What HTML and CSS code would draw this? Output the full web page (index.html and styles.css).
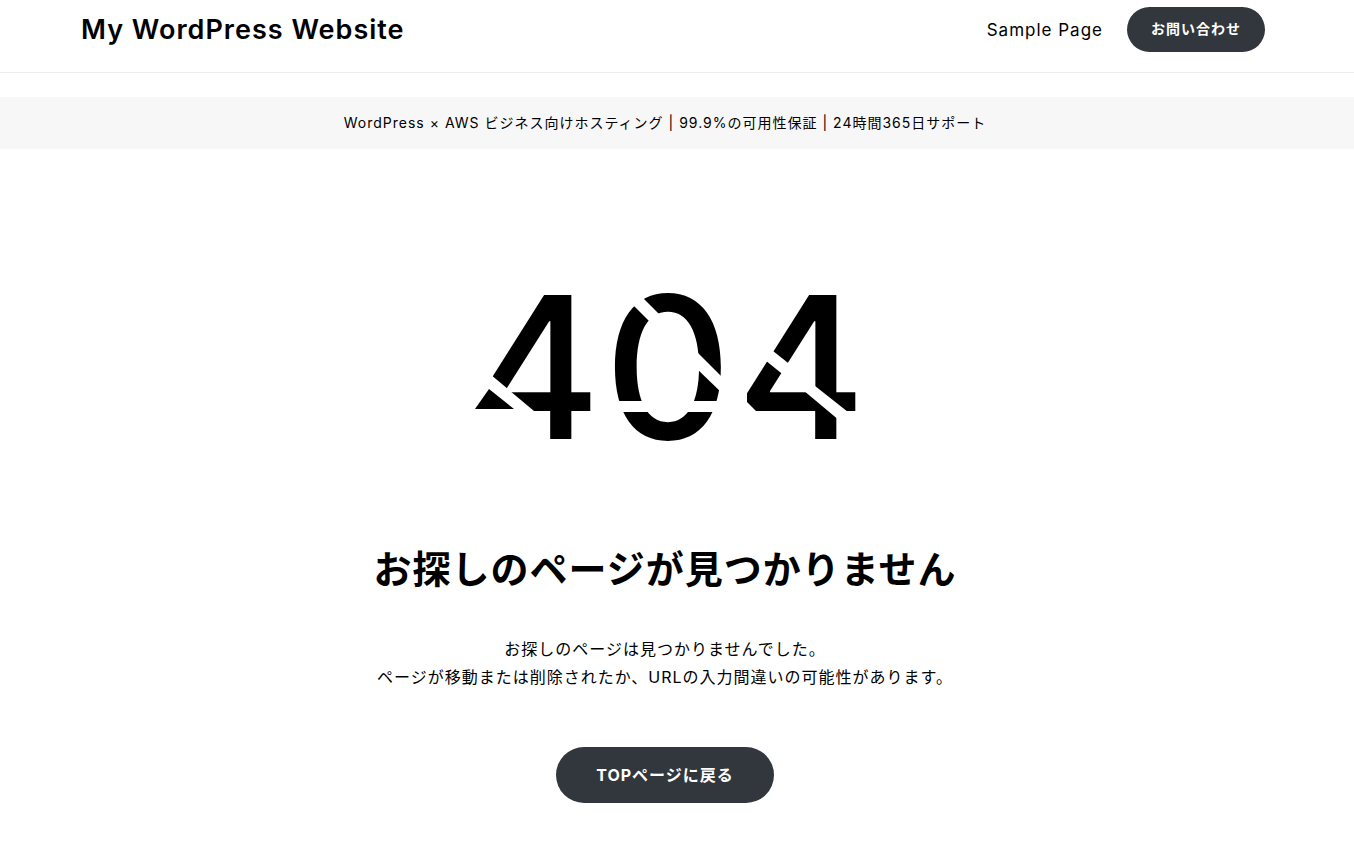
FILE: index.html
```html
<!DOCTYPE html>
<html lang="ja">
<head>
    <meta charset="UTF-8">
    <meta name="viewport" content="width=device-width, initial-scale=1.0">
    <title>ページが見つかりません | My WordPress Website</title>
    <link rel="stylesheet" href="styles.css">
</head>
<body>
    <header class="header">
        <div class="header-inner">
            <a class="site-title" href="#">My WordPress Website</a>
            <nav class="nav">
                <a class="nav-link" href="#">Sample Page</a>
                <a class="btn btn-small" href="#">お問い合わせ</a>
            </nav>
        </div>
    </header>
    <p class="notice">WordPress × AWS ビジネス向けホスティング | 99.9%の可用性保証 | 24時間365日サポート</p>
    <main class="main">
        <svg class="error-code" viewBox="0 0 380 148" role="img" aria-label="404">
            <text class="digits" x="-4 129 261" y="146">404</text>
            <!-- 切れ込み -->
            <g fill="#fff">
                <polygon points="-4,76 9,76 59,118 -4,118"/>
                <polygon points="150,4 178,32 189,26 158,-5"/>
                <polygon points="220,57 248,85 248,101 220,74"/>
                <rect x="135" y="108" width="115" height="11"/>
                <polygon points="298,58 322,77 316,88 290,67"/>
                <polygon points="335,89 373,119 365,128 322,92"/>
                <polygon points="260,97 283,120 260,120"/>
            </g>
            <!-- 左下の破片 -->
            <polygon points="0,116 14,96 39,116"/>
        </svg>
        <h1 class="title">お探しのページが見つかりません</h1>
        <p class="text">お探しのページは見つかりませんでした。<br>ページが移動または削除されたか、URLの入力間違いの可能性があります。</p>
        <a class="btn btn-large" href="#">TOPページに戻る</a>
    </main>
</body>
</html>
```
FILE: styles.css
```css
* {
    box-sizing: border-box;
}

body {
    margin: 0;
    background-color: #fff;
    color: #000;
    font-family: Inter, "Noto Sans CJK JP", sans-serif;
    font-size: 16px;
    line-height: 28px;
    letter-spacing: 1px;
}

a {
    color: inherit;
    text-decoration: none;
}

/* ヘッダー */
.header {
    padding: 7px 8px 20px 0;
    border-bottom: 1px solid #eee;
}

.header-inner {
    display: flex;
    justify-content: space-between;
    align-items: center;
    max-width: 1184px;
    margin: 0 auto;
}

.site-title {
    font-size: 27px;
    font-weight: 600;
}

.nav {
    display: flex;
    align-items: center;
    gap: 24px;
}

.nav-link {
    font-size: 17px;
}

/* ボタン */
.btn {
    display: inline-block;
    border-radius: 28px;
    background-color: #32373e;
    color: #fff;
    font-weight: 700;
}

.btn-small {
    padding: 8px 24px 9px;
    font-size: 14px;
}

.btn-large {
    padding: 14px 40px;
}

/* お知らせ */
.notice {
    margin: 24px 0 0;
    padding: 12px 24px 12px 0;
    background-color: #f7f7f7;
    font-size: 14px;
    text-align: center;
}

/* 404 */
.main {
    display: flex;
    flex-direction: column;
    align-items: center;
    padding: 144px 24px 53px 0;
    text-align: center;
}

.error-code {
    width: 380px;
    max-width: 100%;
    overflow: visible;
}

.digits {
    font-size: 198px;
    font-weight: 500;
    letter-spacing: 0;
}

.title {
    margin: 100px 0 38px;
    font-size: 38px;
    line-height: 56px;
}

.text {
    margin: 0 0 56px;
}
```
